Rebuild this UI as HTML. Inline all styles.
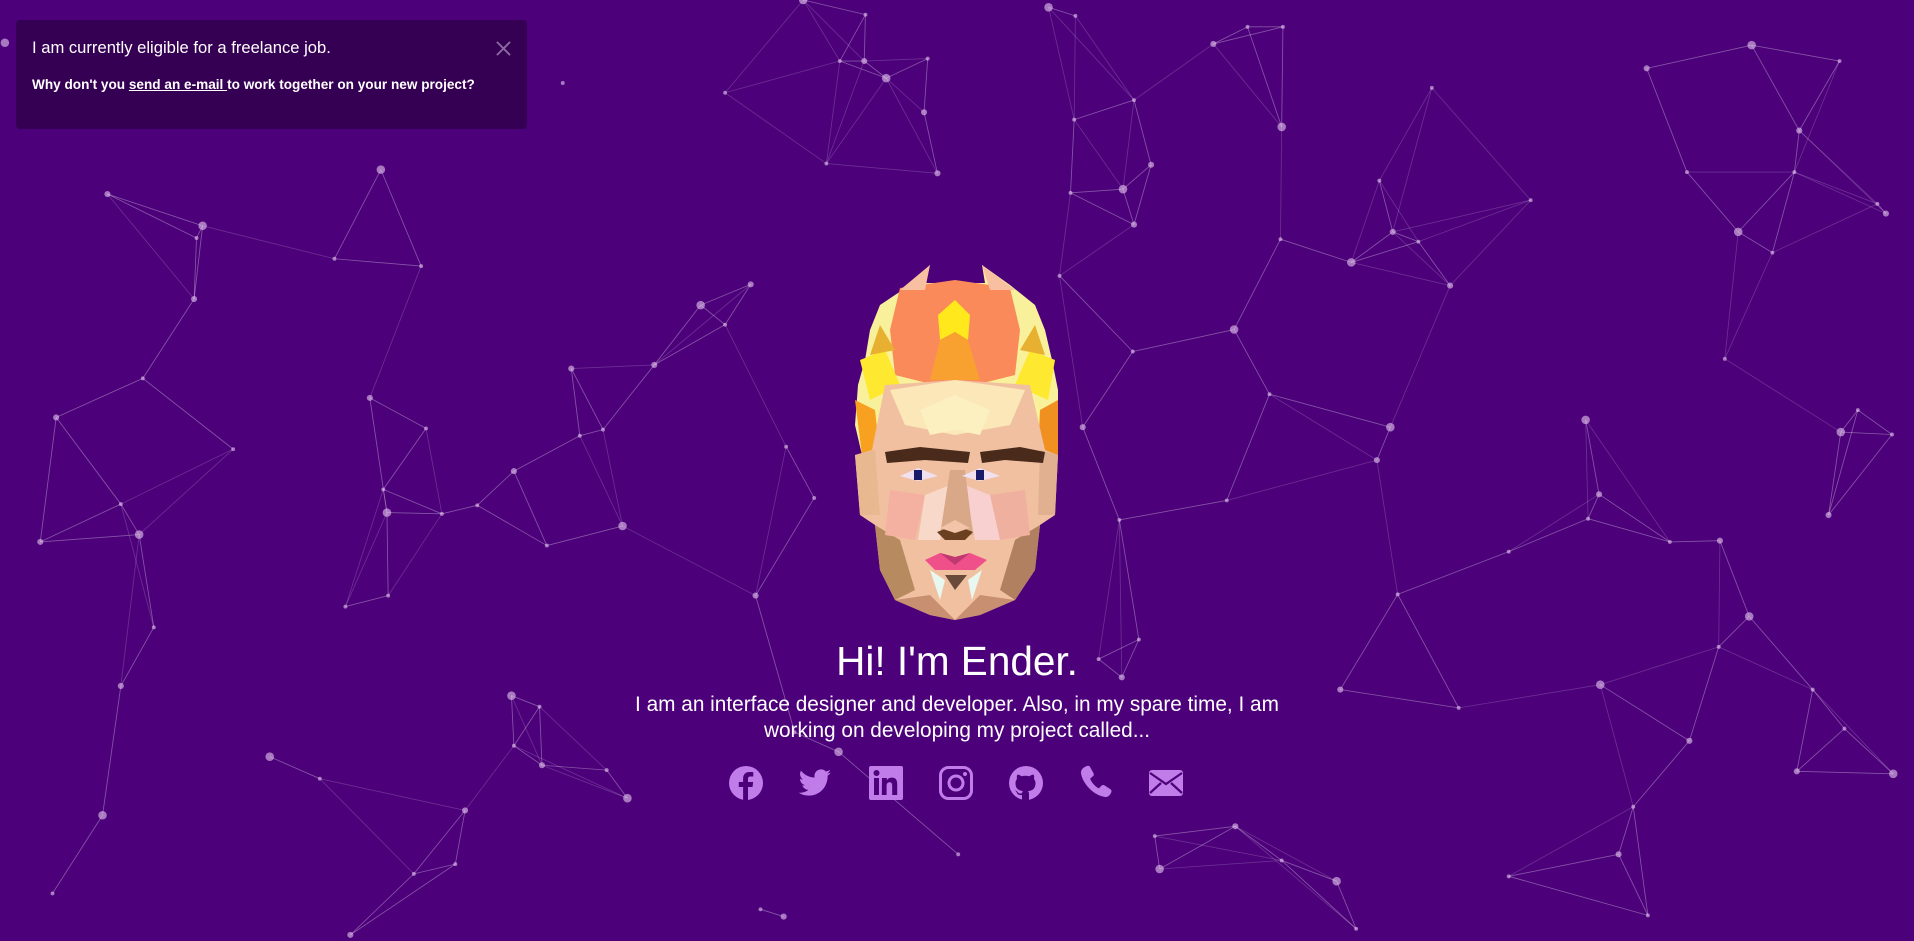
<!DOCTYPE html>
<html><head><meta charset="utf-8">
<style>
html,body{margin:0;padding:0;width:1914px;height:941px;overflow:hidden;background:#4c007a;font-family:"Liberation Sans",sans-serif;color:#fff}
#net{position:absolute;left:0;top:0}
.note{position:absolute;left:16px;top:20px;width:511px;height:109px;background:#350053;border-radius:4px}
.note .t{position:absolute;left:16px;top:18px;font-size:16.6px}
.note .s{position:absolute;left:16px;top:57px;font-size:13.6px;font-weight:bold}
.note .s u{font-weight:bold}
h1{position:absolute;left:0;width:1914px;top:636px;margin:0;text-align:center;font-weight:normal;font-size:40.5px;line-height:50px}
.sub{position:absolute;left:600px;width:714px;top:692px;text-align:center;font-size:20.8px;line-height:26px}
.icons svg{position:absolute;top:765px;width:36px;height:36px}
</style></head><body>
<svg id="net" width="1914" height="941" viewBox="0 0 1568 771" preserveAspectRatio="none"></svg>

<div class="note">
<div class="t">I am currently eligible for a freelance job.</div>
<div class="s">Why don't you <u>send an e-mail </u>to work together on your new project?</div>
<svg style="left:479px;top:20px;position:absolute" width="17" height="17" viewBox="0 0 18 18"><path d="M2 2L16 16M16 2L2 16" stroke="#8a6aa0" stroke-width="2"/></svg>
</div>

<svg style="position:absolute;left:840px;top:250px" width="240" height="370" viewBox="0 0 240 370">
<polygon points="90,15 70,35 40,55 30,80 25,110 18,135 15,175 22,205 40,205 45,140 190,140 200,205 218,205 218,140 212,110 205,80 195,55 170,35 142,15 145,33 115,33 85,33" fill="#f8f09a"/>
<polygon points="60,38 115,30 170,38 180,80 175,125 115,140 55,125 50,80" fill="#fa8a5a"/>
<polygon points="115,50 130,65 128,90 115,82 100,90 98,65" fill="#ffe81c"/>
<polygon points="100,90 115,82 128,90 140,130 90,130" fill="#f8a030"/>
<polygon points="20,110 45,100 60,135 30,150" fill="#ffe830"/>
<polygon points="215,110 190,100 175,135 208,150" fill="#ffe830"/>
<polygon points="15,150 35,160 40,205 22,205" fill="#f8a020"/>
<polygon points="218,150 200,160 198,205 218,205" fill="#f09020"/>
<polygon points="40,75 55,100 30,105" fill="#e8b030"/>
<polygon points="195,75 180,100 205,105" fill="#e8b030"/>
<polygon points="90,15 85,40 60,40" fill="#f8c0a0"/>
<polygon points="142,15 150,40 175,40" fill="#f8c0a0"/>
<polygon points="45,135 115,130 190,135 205,200 218,205 215,265 200,275 195,320 175,350 140,365 115,370 90,365 55,350 40,320 35,275 20,265 15,205 32,200" fill="#f0c0a0"/>
<polygon points="50,140 115,130 185,140 170,175 115,185 65,175" fill="#fbe7b8"/>
<polygon points="80,160 115,145 150,160 140,185 115,180 90,185" fill="#fdf0c0"/>
<polygon points="15,205 35,200 40,265 20,265" fill="#e8b890"/>
<polygon points="218,205 200,200 198,265 215,265" fill="#e0b090"/>
<polygon points="35,275 60,290 75,340 55,350 40,320" fill="#b88a60"/>
<polygon points="200,275 175,290 160,340 175,350 195,320" fill="#b08060"/>
<polygon points="55,350 90,345 115,370 90,365" fill="#c89070"/>
<polygon points="175,350 140,345 115,370 140,365" fill="#c89070"/>
<polygon points="50,240 85,245 75,290 45,285" fill="#f4b0a0"/>
<polygon points="185,240 150,245 160,290 190,285" fill="#f0b0a0"/>
<polygon points="85,245 110,235 100,290 78,290" fill="#f8d8c8"/>
<polygon points="150,245 125,235 135,290 160,290" fill="#f8d0d0"/>
<polygon points="110,220 125,220 133,285 100,285" fill="#d8a888"/>
<polygon points="45,202 80,197 130,202 128,213 85,210 47,213" fill="#4a2a1a"/>
<polygon points="140,202 180,197 205,202 203,213 165,210 142,213" fill="#4a2a1a"/>
<polygon points="60,226 78,218 98,226 78,231" fill="#f0e0f0"/>
<polygon points="74,220 82,220 82,230 74,230" fill="#1a1a6a"/>
<polygon points="122,226 140,218 160,226 140,231" fill="#f0e0f0"/>
<polygon points="136,220 144,220 144,230 136,230" fill="#1a1a6a"/>
<polygon points="97,282 115,275 133,282 125,290 105,290" fill="#6a4020"/>
<polygon points="100,278 115,270 130,278 115,283" fill="#f4c4a8"/>
<polygon points="85,310 100,303 115,307 130,303 147,310 135,320 95,320" fill="#f0508a"/>
<polygon points="100,303 115,307 130,303 115,315" fill="#c03870"/>
<polygon points="90,320 105,330 100,350" fill="#e8f8f0"/>
<polygon points="142,320 128,330 132,350" fill="#e8f8f0"/>
<polygon points="105,325 127,325 115,340" fill="#6a4a3a"/>
</svg>

<h1>Hi! I'm Ender.</h1>
<div class="sub">I am an interface designer and developer. Also, in my spare time, I am working on developing my project called...</div>

<div class="icons">
<svg style="left:728px" viewBox="0 0 36 36"><circle cx="18" cy="18" r="17" fill="#c07ce8"/><path d="M20 36V22h4.5l.7-5H20v-3c0-1.5.5-2.5 2.6-2.5h2.7V7.2c-.5-.1-2-.2-3.8-.2-3.8 0-6.4 2.3-6.4 6.5V17h-4.3v5h4.3v14z" fill="#4c007a"/></svg>
<svg style="left:797px" viewBox="0 0 36 36"><path d="M34 7.5c-1.2.5-2.4.9-3.8 1 1.4-.8 2.4-2.1 2.9-3.6-1.3.8-2.7 1.3-4.2 1.6a6.6 6.6 0 0 0-11.3 6C12.1 12.3 7.300 9.700 4 5.700c-1.800 3-.900 6.800 2 8.800-1.100 0-2.100-.3-3-.8 0 3.200 2.300 5.900 5.300 6.500-1 .3-2 .3-3 .1.8 2.600 3.300 4.500 6.200 4.600A13.300 13.300 0 0 1 1.600 27.600c2.900 1.900 6.400 3 10.100 3 12.200 0 18.900-10.100 18.900-18.900v-.9c1.300-.9 2.400-2.100 3.300-3.400z" fill="#c07ce8"/></svg>
<svg style="left:868px" viewBox="0 0 36 36"><rect x="1" y="1" width="34" height="34" rx="2" fill="#c07ce8"/><rect x="6" y="13" width="5" height="17" fill="#4c007a"/><circle cx="8.5" cy="8" r="3" fill="#4c007a"/><path d="M14 13h4.800v2.300c.8-1.400 2.500-2.700 5-2.700 4.600 0 5.400 3 5.400 7V30h-5v-8.500c0-2-.1-4.200-2.600-4.200-2.600 0-3 1.900-3 4V30h-4.800z" fill="#4c007a"/></svg>
<svg style="left:938px" viewBox="0 0 36 36"><rect x="2.500" y="2.500" width="31" height="31" rx="8" fill="none" stroke="#c07ce8" stroke-width="3"/><circle cx="18" cy="18" r="7" fill="none" stroke="#c07ce8" stroke-width="3"/><circle cx="27" cy="9" r="2" fill="#c07ce8"/></svg>
<svg style="left:1008px" viewBox="0 0 36 36"><circle cx="18" cy="18" r="17" fill="#c07ce8"/><path d="M14 35v-5c-4 .8-5-1.800-5.500-3-.5-1-1.500-1.500-1.500-1.500 1.500-.2 2.500 1.200 2.800 1.800 1 1.500 2.700 1.400 4.200.8.1-.8.5-1.500 1-2-4-.5-7.500-2-7.500-8 0-1.700.6-3.100 1.600-4.200-.2-.5-.7-2 .2-4.200 0 0 1.300-.4 4.300 1.600a14 14 0 0 1 7.800 0c3-2 4.300-1.600 4.300-1.600.9 2.200.3 3.700.2 4.200 1 1.100 1.600 2.500 1.600 4.200 0 6-3.500 7.500-7.500 8 .6.5 1 1.500 1 3v5.900z" fill="#4c007a"/></svg>
<svg style="left:1078px" viewBox="0 0 36 36"><path d="M9 1c1.500-.5 2.500 0 3.200 1.200l3.300 6c.6 1.200.3 2.300-.6 3.100l-2.800 2.300c1.400 3.800 5 7.800 8.800 9.800l2.500-2.600c.9-.9 2-1.100 3.100-.4l5.800 3.700c1.200.8 1.500 1.900 1 3.100-1.200 3-3.500 5.300-6.800 4.700C15.500 30.300 4.500 18.500 3 8.300 2.500 4.800 5.500 2.200 9 1z" fill="#c07ce8"/></svg>
<svg style="left:1148px" viewBox="0 0 36 36"><rect x="1" y="5" width="34" height="26" rx="3" fill="#c07ce8"/><path d="M2 8l16 11L34 8M2 28l11-10M34 28L23 18" stroke="#4c007a" stroke-width="2.200" fill="none"/></svg>
</div>

<script>
var P=[[658,0],[709,12],[688,50],[708,50],[760,48],[726,64],[757,92],[677,134],[594,76],[768,142],[859,6],[881,13],[994,36],[1022,22],[1051,22],[1050,104],[929,82],[880,98],[943,135],[877,158],[920,155],[929,184],[1049,196],[1130,148],[1141,190],[1107,215],[1162,198],[1188,234],[1254,164],[1173,72],[1011,270],[928,288],[868,226],[887,350],[1040,323],[1139,350],[1128,377],[1005,410],[917,426],[1349,56],[1435,37],[1507,50],[1474,107],[1470,141],[1382,141],[1424,190],[1452,207],[1538,167],[1545,175],[1413,294],[1299,344],[1310,405],[1301,425],[1368,444],[1409,443],[1433,505],[1408,530],[1498,422],[1522,336],[1550,356],[1508,354],[1236,452],[1145,487],[1098,565],[1195,580],[1311,561],[1384,607],[1485,565],[1511,597],[1472,632],[1551,634],[1338,661],[1326,700],[1350,750],[1236,718],[1095,722],[1111,761],[1050,705],[1012,677],[946,685],[950,712],[919,555],[933,524],[900,540],[88,159],[166,185],[161,195],[159,245],[274,212],[345,218],[312,139],[461,68],[117,310],[46,342],[99,413],[114,438],[33,444],[191,368],[126,514],[99,562],[84,668],[43,732],[303,326],[349,351],[314,401],[317,420],[362,421],[391,414],[421,386],[448,447],[510,431],[468,302],[475,357],[494,352],[536,299],[574,250],[594,266],[615,233],[283,497],[318,488],[419,570],[442,579],[421,611],[444,627],[497,631],[514,654],[381,664],[373,708],[339,716],[287,766],[221,620],[262,638],[619,488],[667,408],[644,366],[687,616],[651,600],[623,745],[642,751],[785,700],[4,35]];
var s='';
for(var i=0;i<P.length;i++){var d=[];for(var j=0;j<P.length;j++){if(i==j)continue;var dx=P[i][0]-P[j][0],dy=P[i][1]-P[j][1];d.push([dx*dx+dy*dy,j]);}
d.sort(function(a,b){return a[0]-b[0]});for(var k=0;k<3;k++){if(d[k][0]<130*130){var q=P[d[k][1]];s+='<line x1="'+P[i][0]+'" y1="'+P[i][1]+'" x2="'+q[0]+'" y2="'+q[1]+'" stroke="rgba(255,255,255,0.18)" stroke-width="0.7"/>';}}}
for(var i=0;i<P.length;i++){var r=(i*7%5==0)?3.5:(i%3==0?2.5:1.6);s+='<circle cx="'+P[i][0]+'" cy="'+P[i][1]+'" r="'+r+'" fill="rgba(230,200,240,0.6)"/>';}
document.getElementById('net').innerHTML=s;
</script>
</body></html>
